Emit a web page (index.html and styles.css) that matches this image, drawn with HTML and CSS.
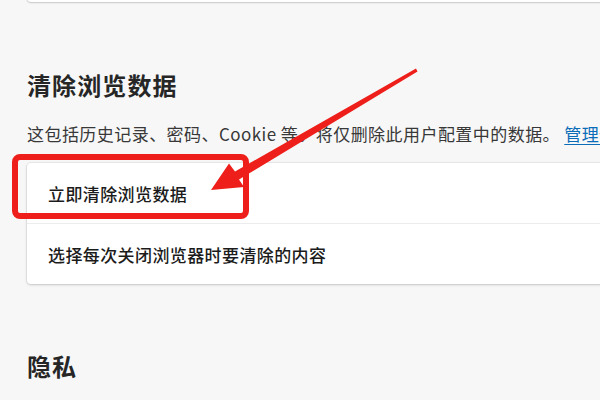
FILE: index.html
```html
<!DOCTYPE html>
<html lang="zh-CN">
<head>
<meta charset="utf-8">
<title>清除浏览数据</title>
<link rel="stylesheet" href="styles.css">
</head>
<body>
<div class="page">
  <div class="top-card"></div>
  <h2 class="section-title">清除浏览数据</h2>
  <p class="desc">这包括历史记录、密码、Cookie 等。将仅删除此用户配置中的数据。 <a class="link" href="#">管理你的数据</a></p>
  <div class="card">
    <div class="row">立即清除浏览数据</div>
    <div class="row">选择每次关闭浏览器时要清除的内容</div>
  </div>
  <h2 class="section-title privacy">隐私</h2>
</div>
<div class="highlight"></div>
<svg class="arrow" width="600" height="400" viewBox="0 0 600 400">
  <polygon points="416,68.4 235,171.5 229,163.5 211,190 244,187 239,179.5 417.5,71.4" fill="#ee1f1a"/>
</svg>
</body>
</html>
```
FILE: styles.css
```css
html, body {
  margin: 0;
  padding: 0;
}
body {
  background: #f7f7f7;
  width: 600px;
  height: 400px;
  overflow: hidden;
  position: relative;
  font-family: "Noto Sans CJK SC", "Noto Sans", sans-serif;
  color: #1b1b1b;
}
.page {
  padding-left: 27px;
  width: 660px;
}
.top-card {
  height: 40px;
  margin-top: -38px;
  background: #fff;
  border-radius: 4px;
  box-shadow: 0 0 0 1px rgba(0,0,0,0.06), 0 1px 2px rgba(0,0,0,0.14);
}
.section-title {
  margin: 67px 0 0 0;
  font-size: 24px;
  line-height: 32px;
  font-weight: 700;
  color: #262626;
  letter-spacing: 1.1px;
}
.desc {
  margin: 21px 0 0 0;
  font-size: 17px;
  line-height: 24px;
  color: #383838;
  white-space: nowrap;
  letter-spacing: 0.45px;
}
.link {
  color: #0b6cb8;
  text-decoration: underline;
  text-underline-offset: 3px;
}
.card {
  margin-top: 17px;
  background: #fff;
  border-radius: 4px;
  box-shadow: 0 0 0 1px rgba(0,0,0,0.05), 0 1px 3px rgba(0,0,0,0.16);
}
.row {
  height: 60px;
  display: flex;
  align-items: center;
  padding-left: 21px;
  font-size: 17px;
  font-weight: 500;
  letter-spacing: 0.4px;
  color: #1b1b1b;
}
.row + .row {
  border-top: 1px solid #ececec;
}
.section-title.privacy {
  margin-top: 66px;
}
.highlight {
  position: absolute;
  left: 12px;
  top: 154px;
  width: 225px;
  height: 53px;
  border: 6px solid #ee1f1a;
  border-radius: 8px;
}
.arrow {
  position: absolute;
  left: 0;
  top: 0;
}
```
